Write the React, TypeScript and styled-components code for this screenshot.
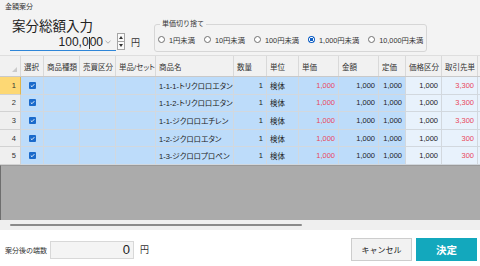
import React from "react";
import styled, { createGlobalStyle } from "styled-components";

const Global = createGlobalStyle`
  html, body { margin: 0; padding: 0; background: #ffffff; }
  body { font-family: "Liberation Sans", "Noto Sans CJK JP", sans-serif; }
  * { box-sizing: border-box; }
`;

const JP = `"Liberation Sans", "Noto Sans CJK JP", sans-serif`;

const Page = styled.div`
  width: 480px;
  height: 266px;
  display: flex;
  flex-direction: column;
  background: #f3f3f3;
  overflow: hidden;
  color: #222;
  font-family: ${JP};
`;

const TitleBar = styled.div`
  height: 14px;
  padding-left: 5px;
  font-size: 7px;
  line-height: 14px;
  color: #333;
`;

const TopPanel = styled.div`
  height: 41px;
  display: flex;
  align-items: flex-start;
`;

const AmountBlock = styled.div`
  margin-left: 10px;
  width: 130px;
  flex-shrink: 0;
  display: flex;
  flex-direction: column;
`;

const AmountTitle = styled.div`
  margin-top: 6px;
  padding-left: 2px;
  font-size: 13.5px;
  line-height: 13px;
  color: #222;
`;

const InputRow = styled.div`
  display: flex;
  align-items: stretch;
  height: 18px;
`;

const AmountInput = styled.div`
  width: 106px;
  height: 18px;
  display: flex;
  justify-content: flex-end;
  align-items: center;
  padding-right: 5px;
  gap: 2px;
  border-bottom: 1px solid #2f86d8;
  font-size: 12px;
  color: #222;
`;

const Caret = styled.span`
  display: inline-block;
  width: 1px;
  height: 12px;
  background: #333;
  vertical-align: middle;
  margin: 0 0 -2px 0;
`;

const Spinner = styled.div`
  margin-left: 1px;
  width: 8px;
  height: 17px;
  display: flex;
  flex-direction: column;
`;

const SpinButton = styled.div`
  flex: 1;
  border: 1px solid #a5a5a5;
  background: #fafafa;
  display: flex;
  align-items: center;
  justify-content: center;
  & + & { border-top: none; }
`;

const Yen = styled.span<{ $size: number }>`
  font-size: ${(p) => p.$size}px;
  color: #333;
  align-self: center;
  margin-left: 6px;
`;

const GroupBox = styled.fieldset`
  margin: 6px 0 0 14px;
  width: 273px;
  min-width: 0;
  height: 32px;
  padding: 0 0 0 3px;
  border: 1px solid #d6d6d6;
  border-radius: 3px;
  display: flex;
  align-items: center;
  flex-shrink: 0;
`;

const Legend = styled.legend`
  font-size: 7px;
  line-height: 8px;
  padding: 0 2px;
  margin-left: 2px;
  color: #333;
`;

const RadioRow = styled.div`
  display: flex;
  align-items: center;
  height: 22px;
  gap: 9px;
  white-space: nowrap;
`;

const RadioItem = styled.label`
  display: flex;
  align-items: center;
  gap: 4px;
  font-size: 7.3px;
  color: #333;
  white-space: nowrap;
  flex-shrink: 0;
`;

const RadioCircle = styled.span<{ $checked?: boolean }>`
  width: 7px;
  height: 7px;
  flex-shrink: 0;
  border-radius: 50%;
  border: ${(p) => (p.$checked ? "none" : "1px solid #707070")};
  background: ${(p) =>
    p.$checked
      ? "radial-gradient(circle, #0f5fc4 0 1.5px, #ffffff 1.7px 2.2px, #0f5fc4 2.4px)"
      : "#ffffff"};
`;

const Grid = styled.div`
  height: 175px;
  display: flex;
  flex-direction: column;
  font-feature-settings: "palt";
`;

const COLS = "21px 23px 36px 36px 40px 78px 33px 32px 40px 40px 27px 36px 36px 2px";

const HeaderRow = styled.div`
  display: grid;
  grid-template-columns: ${COLS};
  height: 22px;
  background: #f1f1f1;
  border-top: 1px solid #dedede;
  border-bottom: 1px solid #c9c9c9;
`;

const HeaderCell = styled.div`
  border-right: 1px solid #d9d9d9;
  font-size: 7.5px;
  padding-left: 3px;
  display: flex;
  align-items: center;
  color: #333;
  white-space: nowrap;
  overflow: hidden;
`;

const Corner = styled.div`
  border-right: 1px solid #d9d9d9;
  display: flex;
  align-items: flex-end;
  justify-content: flex-end;
  padding: 0 3px 4px 0;
`;

const BodyRow = styled.div`
  display: grid;
  grid-template-columns: ${COLS};
  height: 17.6px;
`;

type Tone = "blue" | "light";

const Cell = styled.div<{ $tone: Tone; $align?: "left" | "right" | "center"; $red?: boolean }>`
  background: ${(p) => (p.$tone === "blue" ? "#bddcfa" : "#e8f2fc")};
  border-right: 1px solid #d2d8de;
  border-bottom: 1px solid #d2d8de;
  font-size: 7.5px;
  color: ${(p) => (p.$red ? "#e8485a" : "#222")};
  display: flex;
  align-items: center;
  justify-content: ${(p) =>
    p.$align === "right" ? "flex-end" : p.$align === "center" ? "center" : "flex-start"};
  padding: 0 3px;
  white-space: nowrap;
  overflow: hidden;
`;

const RowHeader = styled.div<{ $active?: boolean }>`
  background: ${(p) => (p.$active ? "#fdd874" : "#efefef")};
  border-right: 1px solid ${(p) => (p.$active ? "#e2b54a" : "#d2d2d2")};
  border-bottom: 1px solid #d2d2d2;
  font-size: 7.5px;
  color: #333;
  display: flex;
  align-items: center;
  justify-content: flex-end;
  padding-right: 4px;
`;

const CheckBox = styled.span`
  width: 7px;
  height: 7px;
  background: #1a6acb;
  border-radius: 1px;
  display: flex;
  align-items: center;
  justify-content: center;
`;

const EmptyArea = styled.div`
  flex: 1;
  background: #ababab;
  border-left: 1px solid #6e6e6e;
  border-top: 1px solid #9a9a9a;
`;

const ScrollTrack = styled.div`
  height: 10px;
  background: #efefef;
  display: flex;
  align-items: center;
  padding-left: 10px;
`;

const ScrollThumb = styled.div`
  width: 292px;
  height: 2px;
  background: #8a8a8a;
  border-radius: 1px;
`;

const BottomBar = styled.div`
  height: 36px;
  background: #ffffff;
  display: flex;
  align-items: center;
  padding: 3px 3px 0 5px;
`;

const BottomLabel = styled.span`
  font-size: 7px;
  color: #333;
  margin-right: 3px;
`;

const RemainderBox = styled.div`
  width: 84px;
  height: 18px;
  border: 1px solid #d8d8d8;
  background: #f4f4f4;
  font-size: 13px;
  display: flex;
  align-items: center;
  justify-content: flex-end;
  padding-right: 3px;
  color: #222;
`;

const Spacer = styled.div`
  flex: 1;
`;

const Button = styled.button<{ $primary?: boolean }>`
  width: 61px;
  height: 23px;
  margin-left: ${(p) => (p.$primary ? "4px" : "0")};
  border: ${(p) => (p.$primary ? "none" : "1px solid #cdcdcd")};
  background: ${(p) => (p.$primary ? "#13a8bd" : "#f2f2f2")};
  color: ${(p) => (p.$primary ? "#ffffff" : "#222")};
  font-family: ${JP};
  font-size: ${(p) => (p.$primary ? "10.5px" : "8px")};
  font-weight: ${(p) => (p.$primary ? 700 : 400)};
  padding: 0;
`;

const headers = ["選択", "商品種類", "売買区分", "単品/セット", "商品名", "数量", "単位", "単価", "金額", "定価", "価格区分", "取引先単", ""];

const rows = [
  { name: "1-1-1-トリクロロエタン", partner: "3,300" },
  { name: "1-1-2-トリクロロエタン", partner: "3,300" },
  { name: "1-1-ジクロロエチレン", partner: "3,300" },
  { name: "1-2-ジクロロエタン", partner: "300" },
  { name: "1-3-ジクロロプロペン", partner: "300" },
];

const radios = ["1円未満", "10円未満", "100円未満", "1,000円未満", "10,000円未満"];

const Check = () => (
  <svg width="5" height="5" viewBox="0 0 5 5">
    <path d="M0.8 2.6 L2 3.7 L4.3 1.2" stroke="#fff" strokeWidth="0.9" fill="none" />
  </svg>
);

export default function App() {
  return (
    <>
      <Global />
      <Page>
        <TitleBar>金額案分</TitleBar>
        <TopPanel>
          <AmountBlock>
            <AmountTitle>案分総額入力</AmountTitle>
            <InputRow>
              <AmountInput>
                <span>
                  100,0<Caret />00
                </span>
                <svg width="6" height="4" viewBox="0 0 6 4">
                  <path d="M0.5 0.8 L3 3.2 L5.5 0.8" stroke="#9a9a9a" strokeWidth="0.8" fill="none" />
                </svg>
              </AmountInput>
              <Spinner>
                <SpinButton>
                  <svg width="4" height="3" viewBox="0 0 4 3">
                    <path d="M0 3 L2 0 L4 3 Z" fill="#333" />
                  </svg>
                </SpinButton>
                <SpinButton>
                  <svg width="4" height="3" viewBox="0 0 4 3">
                    <path d="M0 0 L4 0 L2 3 Z" fill="#333" />
                  </svg>
                </SpinButton>
              </Spinner>
              <Yen $size={9}>円</Yen>
            </InputRow>
          </AmountBlock>
          <GroupBox>
            <Legend>単価切り捨て</Legend>
            <RadioRow>
              {radios.map((r, i) => (
                <RadioItem key={r}>
                  <RadioCircle $checked={i === 3} />
                  {r}
                </RadioItem>
              ))}
            </RadioRow>
          </GroupBox>
        </TopPanel>
        <Grid>
          <HeaderRow>
            <Corner>
              <svg width="5" height="5" viewBox="0 0 5 5">
                <path d="M5 0 L5 5 L0 5 Z" fill="#cacaca" />
              </svg>
            </Corner>
            {headers.map((h, i) => (
              <HeaderCell key={i}>{h}</HeaderCell>
            ))}
          </HeaderRow>
          {rows.map((r, i) => (
            <BodyRow key={i}>
              <RowHeader $active={i === 0}>{i + 1}</RowHeader>
              <Cell $tone="blue" $align="center">
                <CheckBox>
                  <Check />
                </CheckBox>
              </Cell>
              <Cell $tone="blue" />
              <Cell $tone="blue" />
              <Cell $tone="blue" />
              <Cell $tone="blue">{r.name}</Cell>
              <Cell $tone="blue" $align="right">1</Cell>
              <Cell $tone="blue">検体</Cell>
              <Cell $tone="blue" $align="right" $red>1,000</Cell>
              <Cell $tone="blue" $align="right">1,000</Cell>
              <Cell $tone="blue" $align="right">1,000</Cell>
              <Cell $tone="light" $align="right">1,000</Cell>
              <Cell $tone="light" $align="right" $red>{r.partner}</Cell>
              <Cell $tone="light" />
            </BodyRow>
          ))}
          <EmptyArea />
          <ScrollTrack>
            <ScrollThumb />
          </ScrollTrack>
        </Grid>
        <BottomBar>
          <BottomLabel>案分後の端数</BottomLabel>
          <RemainderBox>0</RemainderBox>
          <Yen $size={9}>円</Yen>
          <Spacer />
          <Button>キャンセル</Button>
          <Button $primary>決定</Button>
        </BottomBar>
      </Page>
    </>
  );
}
